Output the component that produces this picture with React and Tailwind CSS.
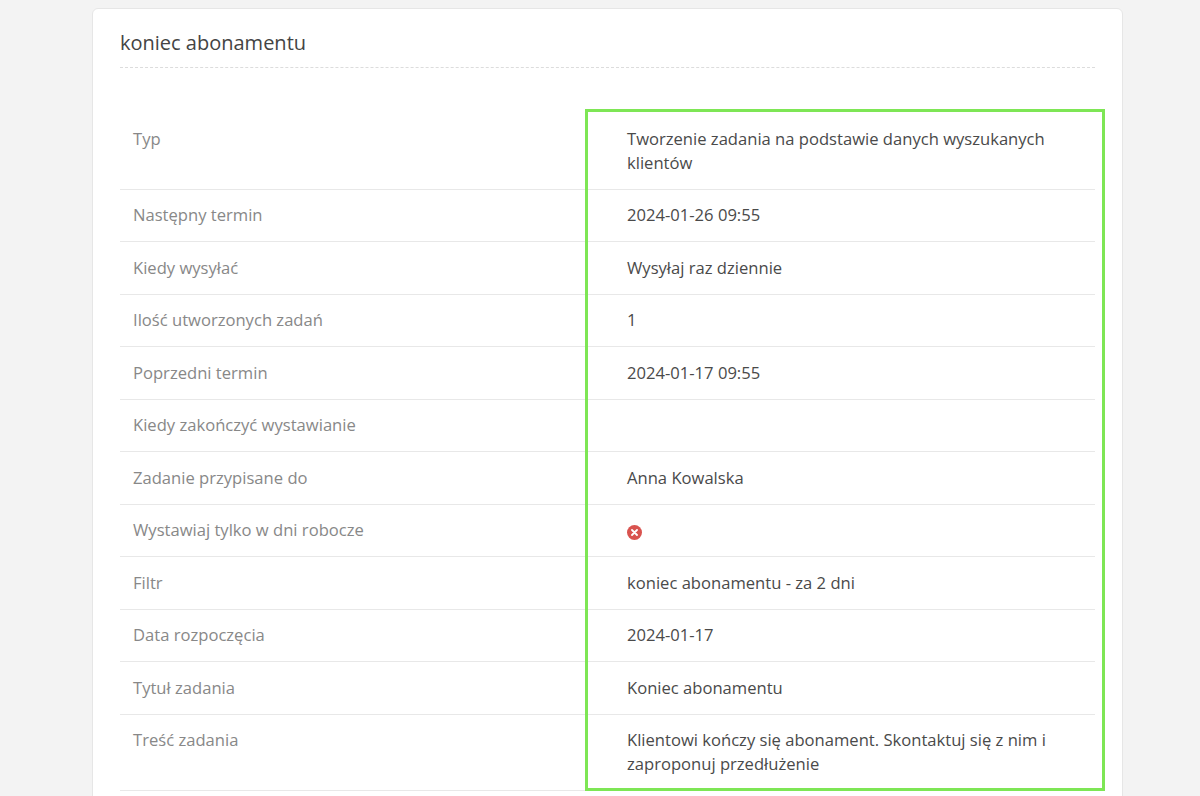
export default function App() {
  const rows = [
    ["Typ", "Tworzenie zadania na podstawie danych wyszukanych klientów"],
    ["Następny termin", "2024-01-26 09:55"],
    ["Kiedy wysyłać", "Wysyłaj raz dziennie"],
    ["Ilość utworzonych zadań", "1"],
    ["Poprzedni termin", "2024-01-17 09:55"],
    ["Kiedy zakończyć wystawianie", ""],
    ["Zadanie przypisane do", "Anna Kowalska"],
    ["Wystawiaj tylko w dni robocze", "X"],
    ["Filtr", "koniec abonamentu - za 2 dni"],
    ["Data rozpoczęcia", "2024-01-17"],
    ["Tytuł zadania", "Koniec abonamentu"],
    ["Treść zadania", "Klientowi kończy się abonament. Skontaktuj się z nim i zaproponuj przedłużenie"],
  ];
  return (
    <div className="h-[796px] overflow-hidden bg-[#f3f3f3] pt-2 px-[92px] pr-[77px]" style={{ fontFamily: '"Open Sans", sans-serif' }}>
      <div className="bg-white border border-[#e6e6e6] rounded-md px-[27px] pt-[20px] h-[900px]">
        <div className="text-[20px] leading-[28px] text-[#444] pb-[10px] border-b border-dashed border-[#dcdcdc]">koniec abonamentu</div>
        <div className="relative mt-[45px]">
          <div className="absolute left-[465px] top-[-4px] w-[520px] h-[682px] border-[3px] border-[#7ee655] pointer-events-none z-10" />
          {rows.map(([k, v], i) => (
            <div key={i} className="flex border-b border-[#e8e8e8] text-[16.6px] leading-[24px] py-[13.75px]">
              <div className="w-[466px] pl-[13px] text-[#888]">{k}</div>
              <div className="flex-1 pl-[41px] pr-4 text-[#4a4a4a]">
                {v === "X" ? (
                  <span className="inline-flex mt-[4px] w-[15px] h-[15px] rounded-full bg-[#d9534f] items-center justify-center">
                    <svg width="7" height="7" viewBox="0 0 7 7"><path d="M1 1L6 6M6 1L1 6" stroke="white" strokeWidth="1.8" strokeLinecap="round" /></svg>
                  </span>
                ) : v}
              </div>
            </div>
          ))}
        </div>
      </div>
    </div>
  );
}
